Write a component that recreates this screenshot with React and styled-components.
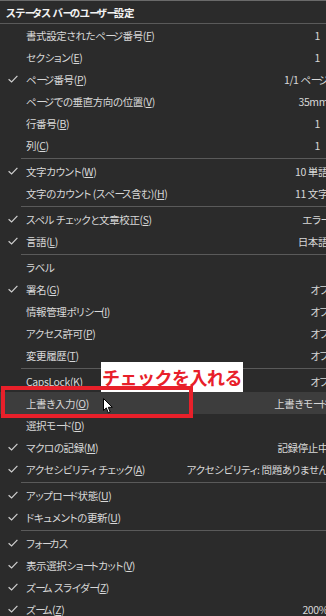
import React from "react";
import styled, { createGlobalStyle } from "styled-components";

const GlobalStyle = createGlobalStyle`
	html, body {
		margin: 0;
		padding: 0;
		background: #2b2b2b;
		overflow: hidden;
	}
`;

// [label, mnemonic, checked, value, valueInset, active]
const groups = [
	[
		["書式設定されたページ番号", "F", false, "1", 8],
		["セクション", "E", false, "1", 8],
		["ページ番号", "P", true, "1/1 ページ"],
		["ページでの垂直方向の位置", "V", false, "35mm"],
		["行番号", "B", false, "1", 8],
		["列", "C", false, "1", 8],
	],
	[
		["文字カウント", "W", true, "10 単語"],
		["文字のカウント (スペース含む)", "H", false, "11 文字"],
	],
	[
		["スペル チェックと文章校正", "S", true, "エラー"],
		["言語", "L", true, "日本語"],
	],
	[
		["ラベル", null, false, ""],
		["署名", "G", true, "オフ"],
		["情報管理ポリシー", "I", false, "オフ"],
		["アクセス許可", "P", false, "オフ"],
		["変更履歴", "T", false, "オフ"],
	],
	[
		["CapsLock", "K", false, "オフ"],
		["上書き入力", "O", false, "上書きモード", 0, true],
		["選択モード", "D", false, ""],
		["マクロの記録", "M", true, "記録停止中"],
		["アクセシビリティ チェック", "A", true, "アクセシビリティ: 問題ありません"],
	],
	[
		["アップロード状態", "U", true, ""],
		["ドキュメントの更新", "U", true, ""],
	],
	[
		["フォーカス", null, true, ""],
		["表示選択ショートカット", "V", true, ""],
		["ズーム スライダー", "Z", true, ""],
		["ズーム", "Z", true, "200%"],
	],
];

// the long-vowel bar is drawn much narrower in the original UI font
function Jp({ text }) {
	return text.split(/(ー)/).map((part, i) =>
		part === "ー" ? <Bar key={i}>ー</Bar> : part
	);
}

function Check() {
	return (
		<svg width="10" height="8" viewBox="0 0 10 8">
			<polyline
				points="0.6,4.2 3.6,7 9.4,0.8"
				fill="none"
				stroke="#cfcfcf"
				strokeWidth="1.2"
			/>
		</svg>
	);
}

function Pointer() {
	return (
		<svg width="10" height="16" viewBox="0 0 10 16">
			<path
				d="M0.5 0.5 L0.5 12.5 L3.3 9.9 L5.3 14.8 L7.2 14 L5.3 9.3 L9.3 9.3 Z"
				fill="#ffffff"
				stroke="#000000"
				strokeWidth="1"
				strokeLinejoin="round"
			/>
		</svg>
	);
}

function App() {
	return (
		<>
			<GlobalStyle />
			<Menu>
				<Header>
					<Jp text="ステータス バーのユーザー設定" />
				</Header>
				{groups.map((group, gi) => (
					<React.Fragment key={gi}>
						{gi > 0 && <Separator />}
						{group.map(([label, key, checked, value, inset, active]) => (
							<Row key={label} active={active}>
								<CheckCell>{checked && <Check />}</CheckCell>
								<Label>
									<Jp text={label} />
									{key && (
										<>
											(<u>{key}</u>)
										</>
									)}
								</Label>
								<Value inset={inset}>
									<Jp text={value} />
								</Value>
							</Row>
						))}
					</React.Fragment>
				))}
				<Callout>チェックを入れる</Callout>
				<RedBox />
				<Cursor>
					<Pointer />
				</Cursor>
			</Menu>
		</>
	);
}

export default App;

const Menu = styled.div`
	position: relative;
	width: 336px;
	background: #2b2b2b;
	border-top: 1px solid #6a6a6a;
	font-family: "Noto Sans CJK JP", "Noto Sans", sans-serif;
	font-feature-settings: "palt";
	font-size: 10.5px;
	letter-spacing: -0.4px;
	color: #d8d8d8;
`;
const Bar = styled.span`
	letter-spacing: -3px;
`;
const Header = styled.div`
	height: 22px;
	display: flex;
	align-items: center;
	padding-left: 6px;
	font-weight: bold;
	color: #f2f2f2;
	border-bottom: 1px solid #5a5a5a;
`;
const Row = styled.div`
	height: 22px;
	display: grid;
	grid-template-columns: 26px 1fr auto;
	align-items: center;
	background: ${(p) => (p.active ? "#3d3d3d" : "transparent")};
	white-space: nowrap;

	u {
		text-underline-offset: 1px;
	}
`;
const CheckCell = styled.div`
	display: flex;
	align-items: center;
	padding-left: 8px;
`;
const Label = styled.span``;
const Value = styled.span`
	padding-right: ${(p) => 8 + (p.inset || 0)}px;
	text-align: right;
`;
const Separator = styled.div`
	height: 4px;
	display: flex;
	align-items: center;
	margin-left: 21px;

	&::after {
		content: "";
		flex: 1;
		height: 1px;
		background: #5a5a5a;
	}
`;
const Callout = styled.div`
	position: absolute;
	left: 101px;
	top: 361px;
	width: 142px;
	height: 30px;
	background: #ffffff;
	color: #e8202a;
	font-size: 18px;
	font-weight: bold;
	font-feature-settings: normal;
	display: flex;
	align-items: center;
	justify-content: center;
	letter-spacing: -0.5px;
`;
const RedBox = styled.div`
	position: absolute;
	left: 1px;
	top: 385px;
	width: 192px;
	height: 32px;
	box-sizing: border-box;
	border: 4px solid #e8202a;
`;
const Cursor = styled.div`
	position: absolute;
	left: 103px;
	top: 397px;
	line-height: 0;
`;
